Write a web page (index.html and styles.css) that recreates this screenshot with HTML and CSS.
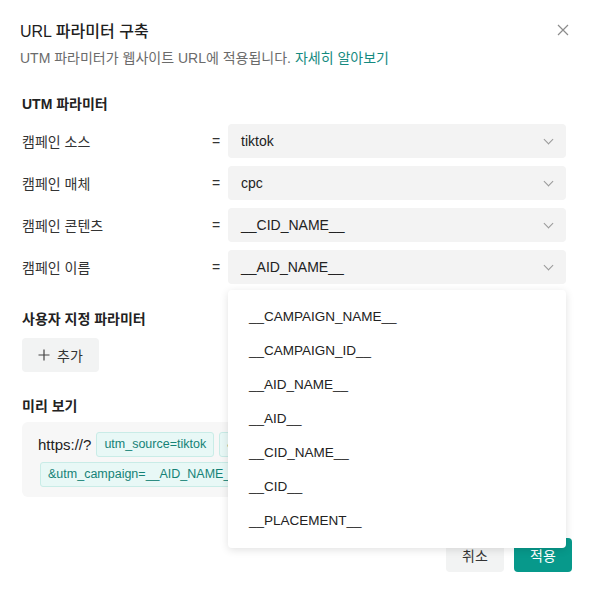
FILE: index.html
```html
<!DOCTYPE html>
<html lang="ko">
<head>
  <meta charset="UTF-8" />
  <meta name="viewport" content="width=device-width, initial-scale=1.0"/>
  <title>URL 파라미터 구축</title>
  <link rel="stylesheet" href="styles.css">
</head>
<body>
  <div class="modal">
    <div class="modal-header">
      <h1>URL 파라미터 구축</h1>
      <button class="close" aria-label="닫기">
        <svg width="12" height="12" viewBox="0 0 12 12"><path d="M1 1L11 11M11 1L1 11" stroke="#8c8c8c" stroke-width="1.2" fill="none"/></svg>
      </button>
    </div>
    <p class="desc">UTM 파라미터가 웹사이트 URL에 적용됩니다. <a href="#">자세히 알아보기</a></p>

    <div class="modal-body">
      <h2>UTM 파라미터</h2>
      <div class="param-rows">
        <div class="param-row">
          <span class="label">캠페인 소스</span>
          <span class="eq">=</span>
          <div class="select"><span>tiktok</span><i class="chev"></i></div>
        </div>
        <div class="param-row">
          <span class="label">캠페인 매체</span>
          <span class="eq">=</span>
          <div class="select"><span>cpc</span><i class="chev"></i></div>
        </div>
        <div class="param-row">
          <span class="label">캠페인 콘텐츠</span>
          <span class="eq">=</span>
          <div class="select"><span>__CID_NAME__</span><i class="chev"></i></div>
        </div>
        <div class="param-row">
          <span class="label">캠페인 이름</span>
          <span class="eq">=</span>
          <div class="select open"><span>__AID_NAME__</span><i class="chev"></i>
            <ul class="dropdown">
              <li>__CAMPAIGN_NAME__</li>
              <li>__CAMPAIGN_ID__</li>
              <li>__AID_NAME__</li>
              <li>__AID__</li>
              <li>__CID_NAME__</li>
              <li>__CID__</li>
              <li>__PLACEMENT__</li>
            </ul>
          </div>
        </div>
      </div>

      <h2 class="custom-title">사용자 지정 파라미터</h2>
      <button class="add-btn">
        <svg width="12" height="12" viewBox="0 0 12 12"><path d="M6 0.5V11.5M0.5 6H11.5" stroke="#444" stroke-width="1.2" fill="none"/></svg>
        <span>추가</span>
      </button>

      <h2 class="preview-title">미리 보기</h2>
      <div class="preview">
        <span class="base">https://?</span>
        <span class="chip">utm_source=tiktok</span>
        <span class="chip">&amp;utm_medium=cpc</span>
        <span class="chip">&amp;utm_content=__CID_NAME__</span>
        <span class="chip">&amp;utm_campaign=__AID_NAME__</span>
      </div>
    </div>

    <div class="modal-footer">
      <button class="btn btn-cancel">취소</button>
      <button class="btn btn-apply">적용</button>
    </div>
  </div>
</body>
</html>
```

FILE: styles.css
```css
body {
  margin: 0;
  background: #fff;
  font-family: "Liberation Sans", "Noto Sans CJK KR", sans-serif;
  color: #222;
}
.modal {
  padding: 18px 21px 18px 22px;
}
.modal-header {
  display: flex;
  justify-content: space-between;
  align-items: center;
  height: 24px;
}
h1 {
  margin: 0 0 0 -2px;
  font-size: 16px;
  font-weight: 500;
  color: #1f1f1f;
}
.close {
  border: 0;
  background: none;
  padding: 0;
  width: 18px;
  height: 18px;
  display: flex;
  align-items: center;
  justify-content: center;
}
.desc {
  margin: 6px 0 0 -2px;
  font-size: 14px;
  line-height: 20px;
  color: #6b6b6b;
}
.desc a {
  color: #148a80;
  text-decoration: none;
}
.modal-body {
  padding-right: 6px;
}
h2 {
  margin: 26px 0 10px;
  font-size: 14px;
  line-height: 20px;
  font-weight: 600;
  color: #222;
}
.param-rows {
  display: flex;
  flex-direction: column;
  gap: 8px;
}
.param-row {
  display: grid;
  grid-template-columns: 182px 24px 1fr;
  align-items: center;
  font-size: 14px;
  color: #333;
}
.eq {
  text-align: center;
  font-size: 14px;
}
.select {
  position: relative;
  height: 34px;
  background: #f3f3f3;
  border-radius: 4px;
  display: flex;
  align-items: center;
  justify-content: space-between;
  padding: 0 14px 0 13px;
  font-size: 14px;
  color: #222;
}
.chev {
  width: 6px;
  height: 6px;
  border-right: 1px solid #999;
  border-bottom: 1px solid #999;
  transform: rotate(45deg);
  margin-top: -4px;
}
.dropdown {
  position: absolute;
  top: 40px;
  left: 0;
  right: 0;
  margin: 0;
  padding: 10px 0;
  list-style: none;
  background: #fff;
  border-radius: 4px;
  box-shadow: 0 2px 8px rgba(0,0,0,0.12);
  z-index: 10;
}
.dropdown li {
  height: 34px;
  line-height: 34px;
  padding-left: 21px;
  font-size: 13.5px;
  color: #222;
}
.custom-title {
  margin: 25px 0 9px;
}
.add-btn {
  border: 0;
  background: #f2f3f3;
  border-radius: 4px;
  height: 34px;
  width: 77px;
  font-family: inherit;
  font-size: 14px;
  color: #333;
  display: flex;
  align-items: center;
  justify-content: center;
  gap: 7px;
}
.preview-title {
  margin: 24px 0 6px;
}
.preview {
  background: #f7f7f7;
  border-radius: 6px;
  padding: 10px 16px;
  display: flex;
  flex-wrap: wrap;
  align-items: center;
  gap: 5px 3px;
}
.base {
  font-size: 15px;
  color: #222;
}
.chip {
  height: 23px;
  line-height: 23px;
  padding: 0 7px;
  margin-left: 2px;
  background: #e8f8f6;
  border: 1px solid #c9ece7;
  border-radius: 3px;
  font-size: 12.5px;
  color: #158276;
}
.modal-footer {
  display: flex;
  justify-content: flex-end;
  gap: 10px;
  margin-top: 41px;
}
.btn {
  border: 0;
  border-radius: 4px;
  width: 58px;
  height: 34px;
  font-family: inherit;
  font-size: 14px;
}
.btn-cancel {
  background: #f2f3f3;
  color: #333;
}
.btn-apply {
  background: #07998b;
  color: #fff;
}
```
